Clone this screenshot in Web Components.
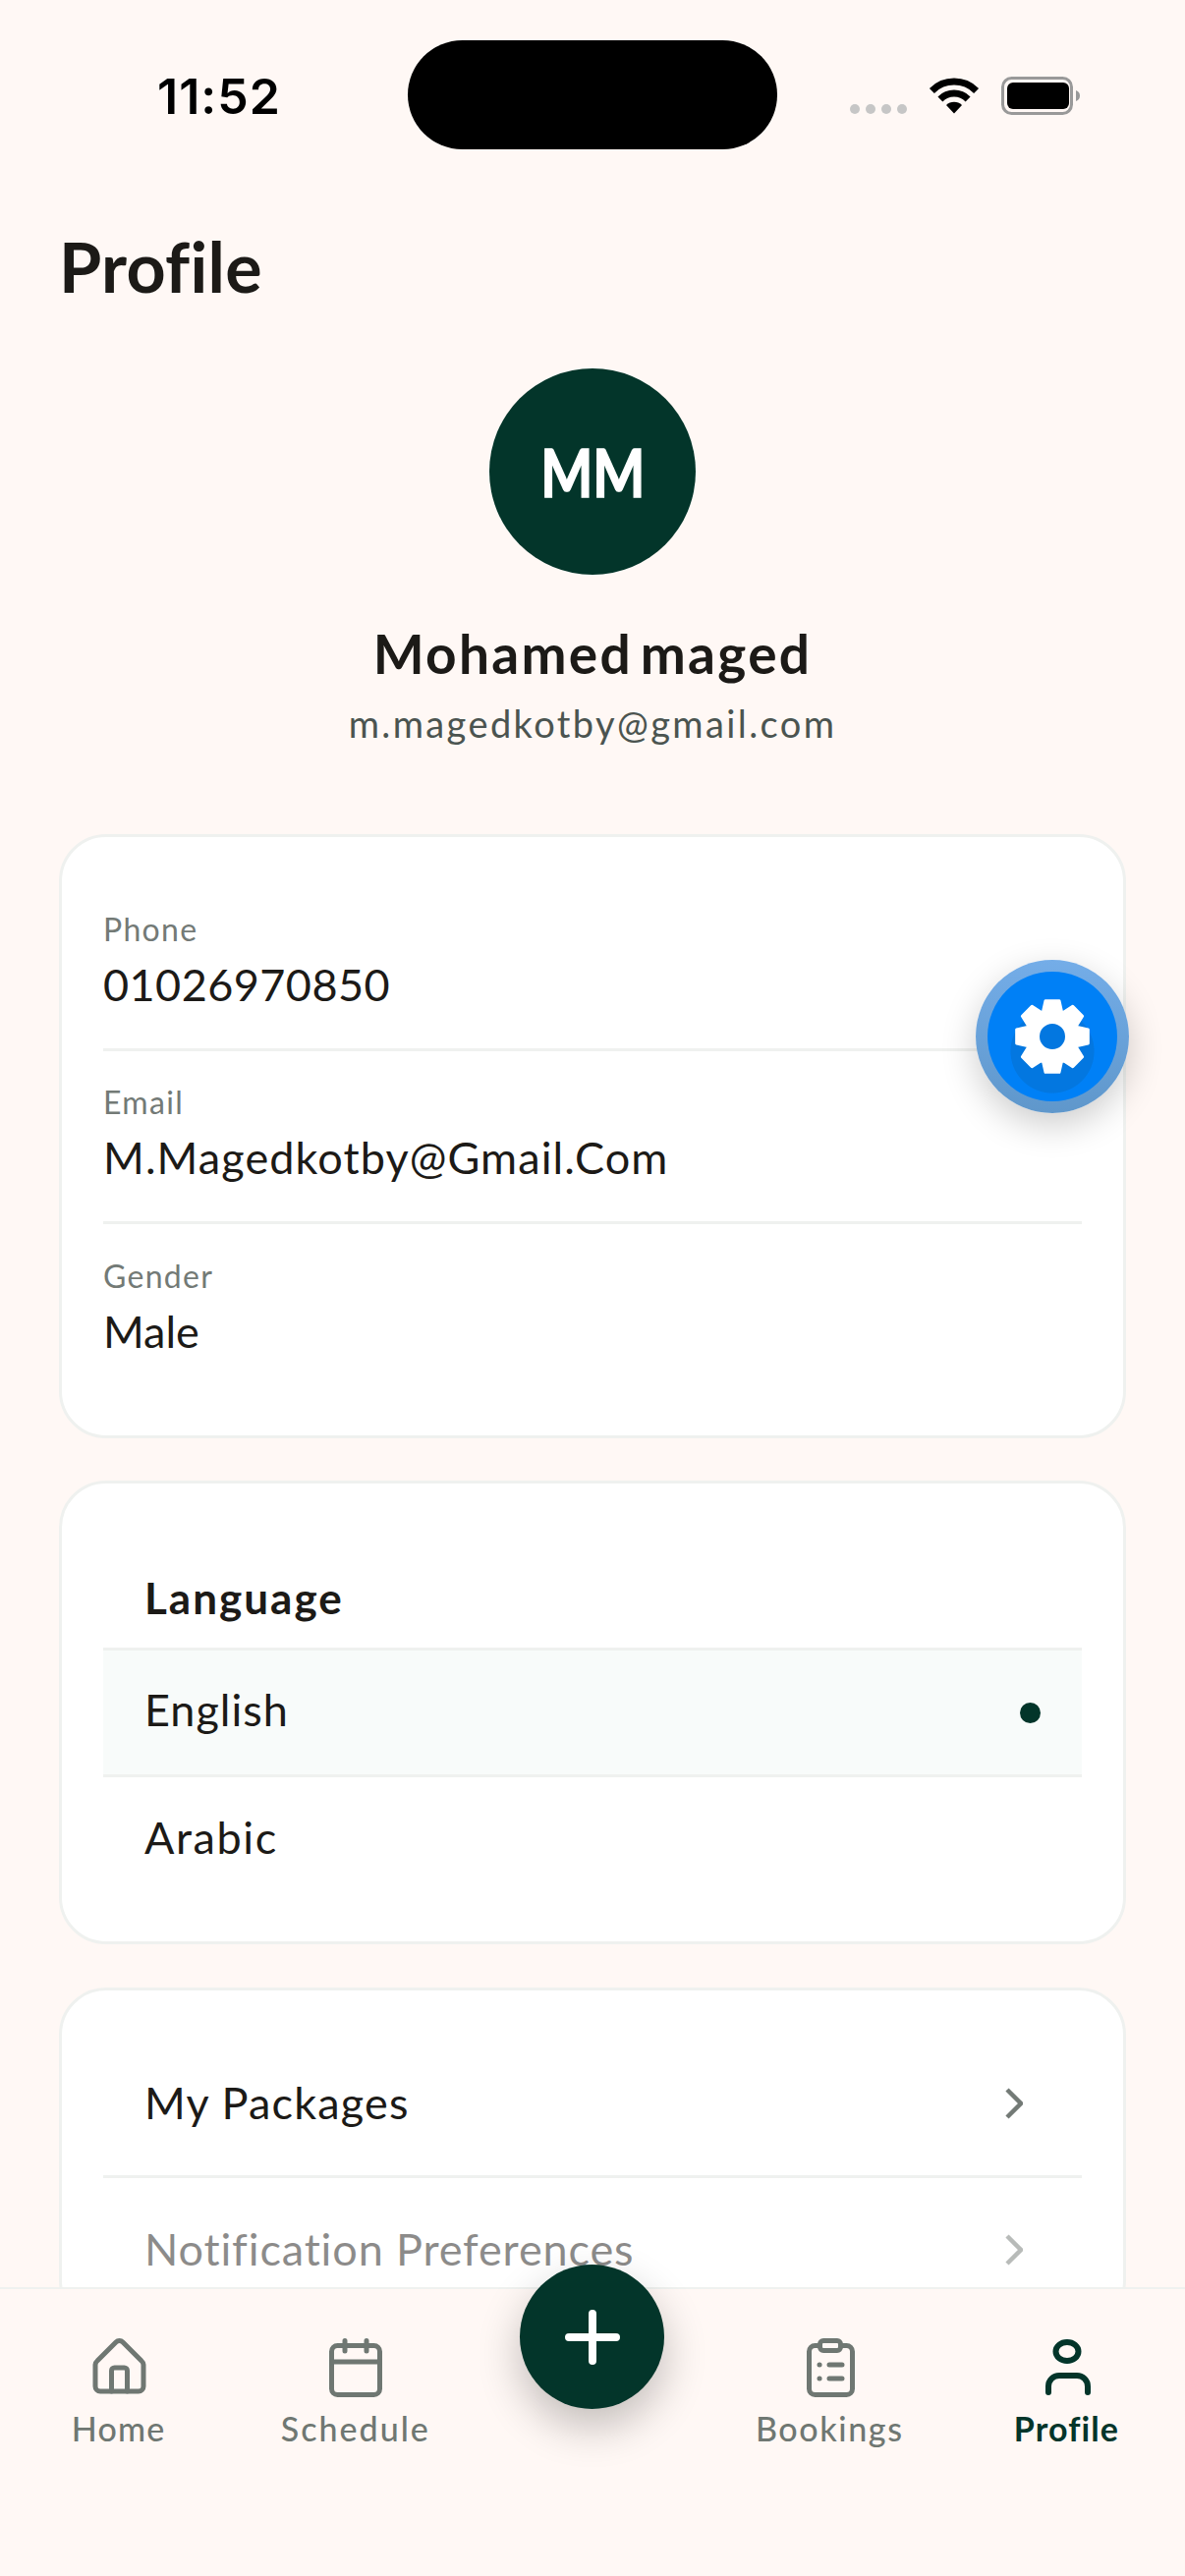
<!DOCTYPE html>
<html lang="en">
<head>
<meta charset="utf-8">
<title>Profile</title>
<style>
  html, body { margin: 0; padding: 0; background: #fff8f5; }
  body { font-family: "Lato", "Noto Sans", sans-serif; color: #1c1a17; }
</style>
</head>
<body>
<app-shell>
  <status-bar></status-bar>
  <profile-screen>
    <page-title>Profile</page-title>
    <profile-header initials="MM" name="Mohamed maged" email="m.magedkotby@gmail.com"></profile-header>
    <info-card>
      <info-row label="Phone" style="--ls:0.45px">01026970850</info-row>
      <info-row label="Email" style="--ls:1.100px">M.Magedkotby@Gmail.Com</info-row>
      <info-row label="Gender" style="--ls:0" last>Male</info-row>
    </info-card>
    <language-card heading="Language">
      <language-row selected style="--ls:1px">English</language-row>
      <language-row style="--ls:1.600px">Arabic</language-row>
    </language-card>
    <menu-card>
      <menu-row style="--ls:1.200px">My Packages</menu-row>
      <menu-row style="--ls:0.85px" disabled>Notification Preferences</menu-row>
    </menu-card>
  </profile-screen>
  <tab-bar>
    <tab-item icon="home" label="Home" style="--ls:1.200px"></tab-item>
    <tab-item icon="schedule" label="Schedule" style="--ls:2px"></tab-item>
    <span></span>
    <tab-item icon="bookings" label="Bookings" style="--ls:1.600px"></tab-item>
    <tab-item icon="profile" label="Profile" style="--ls:1.100px" active></tab-item>
  </tab-bar>
  <settings-fab></settings-fab>
</app-shell>

<script>
class Base extends HTMLElement {
    constructor() {
        super();
        this.attachShadow({ mode: 'open' });
    }
    connectedCallback() {
        this.shadowRoot.innerHTML = this.markup();
    }
}

class AppShell extends Base {
    markup() {
        return `
            <style>
                :host { display: flex; flex-direction: column; position: relative; width: 1206px; height: 2622px; overflow: hidden; background: #fff8f5; }
            </style>
            <slot></slot>
        `;
    }
}

class StatusBar extends Base {
    markup() {
        return `
            <style>
                :host { display: grid; grid-template-columns: 415px 376px 1fr; height: 111px; padding-top: 41px; flex: none; }
                .time { padding: 2px 0 0 160px; align-self: center; font: 600 50px/60px "Inter", sans-serif; color: #000; letter-spacing: 1px; }
                .island { background: #000; border-radius: 56px; }
                .icons { display: flex; align-items: flex-end; gap: 22px; margin-top: 37px; padding-left: 74px; height: 39px; }
                .dots { display: flex; gap: 6px; margin-bottom: 1px; }
                .dots i { width: 10px; height: 10px; border-radius: 50%; background: #c6c6c6; }
                svg { display: block; }
            </style>
            <div class="time">11:52</div>
            <div class="island"></div>
            <div class="icons">
                <div class="dots"><i></i><i></i><i></i><i></i></div>
                <svg width="52" height="38" viewBox="0 0 52 38" style="margin-bottom:1px">
                    <path d="M3.4 14.4A32 32 0 0 1 48.6 14.4M11.9 22.9A20 20 0 0 1 40.1 22.9" fill="none" stroke="#000" stroke-width="7"/>
                    <path d="M26 37.5L18 29a11.3 11.3 0 0 1 16 0Z" fill="#000"/>
                </svg>
                <svg width="81" height="39" viewBox="0 0 81 39">
                    <rect x="1.5" y="1.5" width="70" height="36" rx="9" fill="none" stroke="#999" stroke-width="3"/>
                    <rect x="6" y="6" width="63" height="27" rx="6" fill="#000"/>
                    <path d="M76 14c3 1 4 3 4 5.500s-1 4.500-4 5.500Z" fill="#999"/>
                </svg>
            </div>
        `;
    }
}

class ProfileScreen extends Base {
    markup() {
        return `
            <style>
                :host { display: flex; flex-direction: column; flex: 1; min-height: 0; overflow: hidden; padding: 77px 60px 0; gap: 44px; }
            </style>
            <slot></slot>
        `;
    }
}

class PageTitle extends Base {
    markup() {
        return `
            <style>
                :host { display: block; flex: none; margin: 0 0 -45px 0; font-size: 70px; line-height: 84px; font-weight: 700; color: #1c1a17; letter-spacing: 0.3px; }
            </style>
            <slot></slot>
        `;
    }
}

class ProfileHeader extends Base {
    markup() {
        const initials = this.getAttribute('initials');
        const name = this.getAttribute('name');
        const email = this.getAttribute('email');
        return `
            <style>
                :host { display: flex; flex-direction: column; align-items: center; flex: none; padding: 63px 0 46px; }
                .avatar { width: 210px; height: 210px; border-radius: 50%; background: #03352a; color: #fff; display: flex; align-items: center; justify-content: center; font-size: 67px; font-weight: 700; }
                .avatar span { transform: scaleX(0.84); -webkit-text-stroke: 1.5px #fff; }
                .name { margin-top: 47px; font-size: 55px; line-height: 66px; font-weight: 700; letter-spacing: 2.300px; word-spacing: -8px; }
                .email { margin-top: 15px; font-size: 38px; line-height: 46px; color: #4b5450; letter-spacing: 2.400px; }
            </style>
            <div class="avatar"><span>${initials}</span></div>
            <div class="name">${name}</div>
            <div class="email">${email}</div>
        `;
    }
}

const cardStyle = `
    display: block; flex: none; background: #fff; border: 3px solid #eff1ef; border-radius: 48px;
`;

class InfoCard extends Base {
    markup() {
        return `
            <style>
                :host { ${cardStyle} padding: 43px 42px 41px; margin-bottom: -1px; }
            </style>
            <slot></slot>
        `;
    }
}

class InfoRow extends Base {
    markup() {
        const last = this.hasAttribute('last');
        return `
            <style>
                :host { display: block; padding: ${last ? '33px 0 38px' : '32px 0 38px'}; margin-top: 1px; border-bottom: ${last ? 'none' : '3px solid #eff1ef'}; }
                :host(:first-child) { margin-top: 0; }
                .label { font-size: 32px; line-height: 38px; color: #737a76; letter-spacing: 1.300px; }
                .value { margin-top: 10px; font-size: 45px; line-height: 54px; color: #1c1a17; letter-spacing: var(--ls, 0); }
            </style>
            <div class="label">${this.getAttribute('label')}</div>
            <div class="value"><slot></slot></div>
        `;
    }
}

class LanguageCard extends Base {
    markup() {
        return `
            <style>
                :host { ${cardStyle} padding: 43px 42px 42px; }
                .heading { padding: 47px 42px 25px; font-size: 44px; line-height: 52px; font-weight: 700; letter-spacing: 2px; border-bottom: 3px solid #eff1ef; }
            </style>
            <div class="heading">${this.getAttribute('heading')}</div>
            <slot></slot>
        `;
    }
}

class LanguageRow extends Base {
    markup() {
        const selected = this.hasAttribute('selected');
        return `
            <style>
                :host { display: flex; align-items: center; justify-content: space-between; height: ${selected ? 126 : 125}px; padding: 0 42px; font-size: 45px; line-height: 54px; background: ${selected ? '#f8fbfa' : 'transparent'}; border-bottom: ${selected ? '3px solid #eff1ef' : 'none'}; }
                .text { padding-bottom: ${selected ? 6 : 4}px; letter-spacing: var(--ls, 0); }
                .dot { width: 21px; height: 21px; border-radius: 50%; background: #03352a; }
            </style>
            <div class="text"><slot></slot></div>
            ${selected ? '<div class="dot"></div>' : ''}
        `;
    }
}

class MenuCard extends Base {
    markup() {
        return `
            <style>
                :host { ${cardStyle} padding: 42px 42px 0; }
            </style>
            <slot></slot>
        `;
    }
}

class MenuRow extends Base {
    markup() {
        const disabled = this.hasAttribute('disabled');
        return `
            <style>
                :host { display: block; border-bottom: 3px solid #eff1ef; }
                .row { display: flex; align-items: center; justify-content: space-between; height: 146px; padding: 0 60px 0 42px; font-size: 45px; line-height: 54px; opacity: ${disabled ? 0.5 : 1}; }
                .text { padding-bottom: 3px; letter-spacing: var(--ls, 0); }
                svg { display: block; }
            </style>
            <div class="row">
                <div class="text"><slot></slot></div>
                <svg width="18" height="32" viewBox="0 0 18 32"><path d="M2 2L16 16L2 30" fill="none" stroke="#737a76" stroke-width="4.500"/></svg>
            </div>
        `;
    }
}

const tabIcons = {
    home: `<path d="M12 33a6 6 0 0 1 2-4L33 10a5 5 0 0 1 7 0L59 29a6 6 0 0 1 2 4V55a5 5 0 0 1-5 5H17a5 5 0 0 1-5-5Z"/>
           <path d="M28.500 60V39a3 3 0 0 1 3-3H41.500a3 3 0 0 1 3 3V60"/>`,
    schedule: `<rect x="11.500" y="13.500" width="49" height="50" rx="6"/>
               <path d="M11.500 30H60.500M25 8.500V19M47 8.500V19"/>`,
    bookings: `<rect x="15.500" y="13.500" width="44" height="50" rx="6"/>
               <rect x="26.500" y="8.500" width="21" height="10" rx="3.500" fill="#fff8f5"/>
               <path d="M26 33H26.100M26 47H26.100M36 33H49M36 47H49"/>`,
    profile: `<ellipse cx="37" cy="19.500" rx="11.500" ry="9.500"/>
              <path d="M18 61V55a11 11 0 0 1 11-11H47a11 11 0 0 1 11 11V61"/>`
};

class TabBar extends Base {
    markup() {
        return `
            <style>
                :host { display: grid; grid-template-columns: repeat(5, 1fr); position: relative; flex: none; height: 292px; border-top: 2px solid #eff1ef; background: #fff8f5; }
                .add { position: absolute; left: 50%; top: -25px; margin-left: -74px; width: 147px; height: 147px; border-radius: 50%; background: #03352a; box-shadow: 0 18px 44px rgba(0, 0, 0, 0.24); display: flex; align-items: center; justify-content: center; }
                svg { display: block; }
            </style>
            <slot></slot>
            <div class="add">
                <svg width="60" height="60" viewBox="0 0 60 60"><path d="M30 6V54M6 30H54" stroke="#fff" stroke-width="8" stroke-linecap="round"/></svg>
            </div>
        `;
    }
}

class TabItem extends Base {
    markup() {
        const active = this.hasAttribute('active');
        const color = active ? '#03352a' : '#6f7772';
        return `
            <style>
                :host { display: flex; flex-direction: column; align-items: center; padding-top: 44px; color: ${color}; }
                svg { display: block; }
                .label { margin-top: 6px; font-size: 34px; line-height: 40px; font-weight: ${active ? 700 : 500}; white-space: nowrap; letter-spacing: var(--ls, 1px); }
            </style>
            <svg width="72" height="72" viewBox="0 0 72 72" fill="none" stroke="${color}" stroke-width="${active ? 6 : 5}" stroke-linecap="round" stroke-linejoin="round">${tabIcons[this.getAttribute('icon')]}</svg>
            <div class="label">${this.getAttribute('label')}</div>
        `;
    }
}

// 8 teeth, the white stroke rounds the corners
function gearPath(cx, cy, outer, root, hole) {
    let d = '';
    const step = Math.PI / 4;
    for (let i = 0; i < 8; i++) {
        const a = i * step - Math.PI / 2;
        const pts = [[root, a - 0.36], [outer, a - 0.19], [outer, a + 0.19], [root, a + 0.36]];
        pts.forEach(([r, t], n) => {
            const x = (cx + r * Math.cos(t)).toFixed(2);
            const y = (cy + r * Math.sin(t)).toFixed(2);
            d += (i === 0 && n === 0 ? 'M' : 'L') + x + ' ' + y;
        });
    }
    d += `ZM${cx - hole} ${cy}a${hole} ${hole} 0 1 0 ${hole * 2} 0a${hole} ${hole} 0 1 0 ${-hole * 2} 0Z`;
    return d;
}

class SettingsFab extends Base {
    markup() {
        return `
            <style>
                :host { display: flex; align-items: center; justify-content: center; position: absolute; left: 993px; top: 977px; width: 156px; height: 156px; border-radius: 50%; background: linear-gradient(#74ade8, #5f97cb); box-shadow: 0 12px 36px rgba(0, 0, 0, 0.2); }
                .inner { width: 132px; height: 132px; border-radius: 50%; display: flex; align-items: center; justify-content: center; background: radial-gradient(circle 43px at 50% 61.400%, #0377e0 98%, #0080f6 100%); }
                svg { display: block; }
            </style>
            <div class="inner">
                <svg width="80" height="80" viewBox="0 0 80 80"><path d="${gearPath(40, 40, 37, 27, 14.5)}" fill="#fff" fill-rule="evenodd" stroke="#fff" stroke-width="3" stroke-linejoin="round"/></svg>
            </div>
        `;
    }
}

customElements.define('app-shell', AppShell);
customElements.define('status-bar', StatusBar);
customElements.define('profile-screen', ProfileScreen);
customElements.define('page-title', PageTitle);
customElements.define('profile-header', ProfileHeader);
customElements.define('info-card', InfoCard);
customElements.define('info-row', InfoRow);
customElements.define('language-card', LanguageCard);
customElements.define('language-row', LanguageRow);
customElements.define('menu-card', MenuCard);
customElements.define('menu-row', MenuRow);
customElements.define('tab-bar', TabBar);
customElements.define('tab-item', TabItem);
customElements.define('settings-fab', SettingsFab);
</script>
</body>
</html>
